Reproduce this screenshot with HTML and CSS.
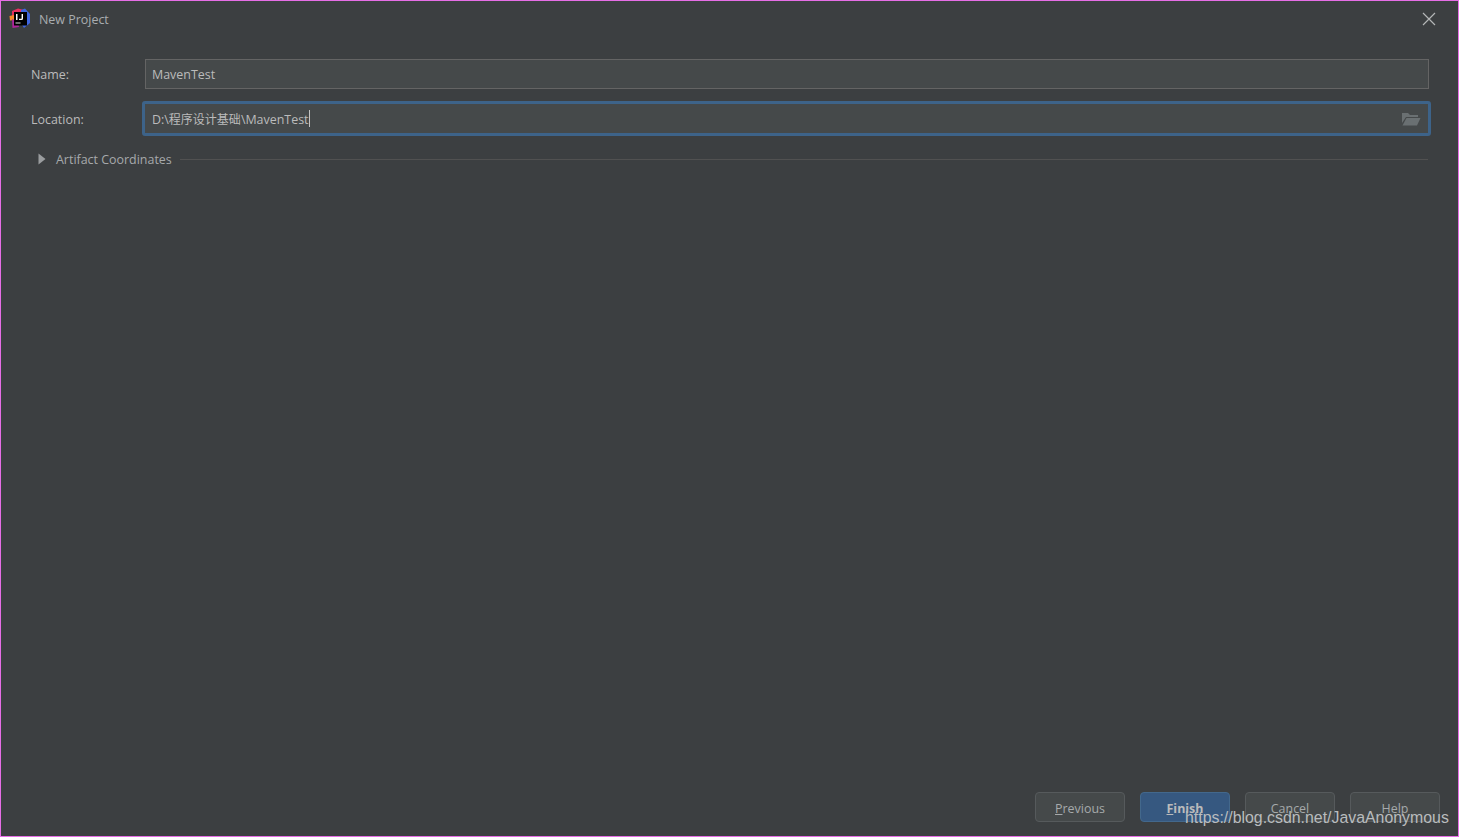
FILE: index.html
```html
<!DOCTYPE html>
<html lang="en">
<head>
<meta charset="utf-8">
<title>New Project</title>
<link rel="stylesheet" href="styles.css">
</head>
<body>
<div class="window">
  <header class="titlebar">
    <svg class="logo" width="22" height="22" viewBox="0 0 22 22" aria-hidden="true">
      <path d="M3 3 L9 0.5 L15 2 L10 12 L3 9 Z" fill="#e8305f"/>
      <path d="M12 2 L16 0.5 L21 6 L21 15 L15 20 L11 14 Z" fill="#3f66e0"/>
      <path d="M0.5 8 L5 7 L6 12 L1 12.5 Z" fill="#f7882a"/>
      <path d="M3 11 L9 14 L10 19 L3.5 20 Z" fill="#b0249c"/>
      <rect x="5" y="4" width="13" height="13.5" fill="#000"/>
      <rect x="6.5" y="14.5" width="5" height="1" fill="#ddd"/>
      <path d="M7 6 H8.5 V12 H7 Z M11 6 H14 V10.5 Q14 12 12.5 12 H10 V10.8 H12 Q12.6 10.8 12.6 10.2 V6 Z" fill="#fff"/>
    </svg>
    <span class="title">New Project</span>
    <svg class="close" width="14" height="14" viewBox="0 0 14 14" aria-hidden="true">
      <path d="M1 1 L13 13 M13 1 L1 13" stroke="#b4b6b7" stroke-width="1.2" fill="none"/>
    </svg>
  </header>

  <main class="form">
    <div class="row row-name">
      <label class="label">Name:</label>
      <div class="field">MavenTest</div>
    </div>
    <div class="row row-location">
      <label class="label">Location:</label>
      <div class="field field-focus">
        <span class="value">D:\<span class="cjk">程序设计基础</span>\MavenTest</span><span class="caret"></span>
        <svg class="folder" width="20" height="14" viewBox="0 0 20 14" aria-hidden="true">
          <path d="M1 1 H7 L9 3 H17 V5 H5 L1 11 Z" fill="#6a7072"/>
          <path d="M5.5 6 H19.5 L16 13.5 H1.5 Z" fill="#6a7072"/>
        </svg>
      </div>
    </div>
    <div class="section">
      <svg class="arrow" width="8" height="12" viewBox="0 0 8 12" aria-hidden="true">
        <path d="M0.5 0.5 L7.5 6 L0.5 11.5 Z" fill="#9a9d9f"/>
      </svg>
      <span class="section-title">Artifact Coordinates</span>
      <span class="section-line"></span>
    </div>
  </main>

  <footer class="buttons">
    <button class="btn"><u>P</u>revious</button>
    <button class="btn btn-primary"><u>F</u>inish</button>
    <button class="btn">Cancel</button>
    <button class="btn">Help</button>
  </footer>

  <div class="watermark">https://blog.csdn.net/JavaAnonymous</div>
</div>
</body>
</html>
```
FILE: styles.css
```css
* { box-sizing: border-box; }
html, body { margin: 0; height: 100%; }
body { background: #3c3f41; overflow: hidden; }

.window {
  position: relative;
  width: 1459px;
  height: 837px;
  display: flex;
  flex-direction: column;
  background: #3c3f41;
  border: 1px solid #e66ee6;
  color: #bbbbbb;
  font-family: "Open Sans", "Noto Sans CJK SC", sans-serif;
  font-size: 12.45px;
}

.titlebar {
  height: 36px;
  display: flex;
  align-items: center;
  padding: 0 22px 0 8px;
  flex: none;
}
.logo { flex: none; }
.title { margin-left: 8px; color: #a9adb0; }
.close { margin-left: auto; }

.form {
  flex: 1;
  padding: 22px 30px 0 30px;
  display: flex;
  flex-direction: column;
}
.row { display: flex; align-items: center; }
.label { width: 114px; flex: none; }
.row-name { height: 30px; }
.row-location { height: 35px; margin-top: 12px; }
.row-location .label { padding-top: 2px; }

.field {
  flex: 1;
  height: 30px;
  display: flex;
  align-items: center;
  padding: 0 6px;
  background: #45494a;
  border: 1px solid #646464;
  white-space: nowrap;
}
.row-name .field { margin-right: -1px; }
.field-focus {
  height: 35px;
  margin-left: -3px;
  margin-right: -3px;
  padding: 0 7px 0 7px;
  border: 3px solid #3d6389;
  border-radius: 3px;
}
.cjk { font-size: 12px; }
.caret { width: 1.5px; height: 17px; background: #c4c4c4; }
.folder { margin-left: auto; }

.section {
  display: flex;
  align-items: center;
  height: 20px;
  margin-top: 13px;
}
.arrow { margin-left: 7px; flex: none; }
.section-title { margin-left: 10px; color: #a6a9ab; white-space: nowrap; }
.section-line { flex: 1; height: 1px; background: #515151; margin-left: 8px; }

.buttons {
  flex: none;
  display: flex;
  justify-content: flex-end;
  gap: 15px;
  padding: 0 18px 14px 0;
}
.btn {
  width: 90px;
  height: 30px;
  padding: 2px 0 0;
  background: #45494a;
  border: 1px solid #565a5c;
  border-radius: 4px;
  color: #a6a9ab;
  font: inherit;
}
.btn-primary {
  background: #365880;
  border-color: #43688c;
  color: #bbbbbb;
  font-weight: 700;
}

.watermark {
  position: absolute;
  left: 1184px;
  top: 807px;
  font-family: "Liberation Sans", sans-serif;
  font-size: 15.88px;
  line-height: 19px;
  color: #b9bcbe;
  white-space: nowrap;
}
```
